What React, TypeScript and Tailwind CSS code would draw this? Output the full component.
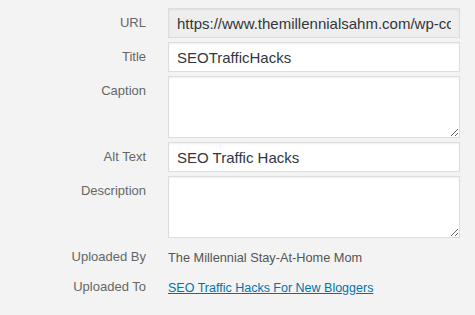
import React from "react";

function Label({ children }: { children: React.ReactNode }) {
  return (
    <div className="w-[146px] shrink-0 text-right pt-[6px] leading-[18px] text-[13px] text-[#666666]">
      {children}
    </div>
  );
}

const inputCls =
  "w-[292px] h-[30px] border border-[#dddddd] px-[8px] text-[15px] text-[#32373c] shadow-[inset_0_1px_2px_rgba(0,0,0,0.07)] outline-none";
const areaCls =
  "block w-[292px] h-[62px] border border-[#dddddd] bg-white px-[8px] py-[4px] text-[15px] text-[#32373c] shadow-[inset_0_1px_2px_rgba(0,0,0,0.07)] outline-none resize-y";

export default function App() {
  return (
    <div
      className="w-[475px] h-[315px] bg-[#f3f3f3] pt-[8px] overflow-hidden"
      style={{ fontFamily: '"Liberation Sans", Arial, sans-serif' }}
    >
      <div className="flex flex-col gap-[4px]">
        <div className="flex">
          <Label>URL</Label>
          <div className="ml-[22px]">
            <input
              readOnly
              className={inputCls + " bg-[#eeeeee]"}
              value="https://www.themillennialsahm.com/wp-content/uploads/2018/01/SEOTrafficHacks.png"
            />
          </div>
        </div>
        <div className="flex">
          <Label>Title</Label>
          <div className="ml-[22px]">
            <input readOnly className={inputCls + " bg-white"} value="SEOTrafficHacks" />
          </div>
        </div>
        <div className="flex">
          <Label>Caption</Label>
          <div className="ml-[22px]">
            <textarea readOnly className={areaCls} />
          </div>
        </div>
        <div className="flex">
          <Label>Alt Text</Label>
          <div className="ml-[22px]">
            <input readOnly className={inputCls + " bg-white"} value="SEO Traffic Hacks" />
          </div>
        </div>
        <div className="flex">
          <Label>Description</Label>
          <div className="ml-[22px]">
            <textarea readOnly className={areaCls} />
          </div>
        </div>
        <div className="flex h-[30px]">
          <Label>Uploaded By</Label>
          <div className="ml-[22px] pt-[7px] leading-[18px] text-[12.75px] text-[#555555]">
            The Millennial Stay-At-Home Mom
          </div>
        </div>
        <div className="flex h-[24px] -mt-[4px]">
          <Label>Uploaded To</Label>
          <div className="ml-[22px] pt-[7px] leading-[18px] text-[12.5px]">
            <a href="#" className="text-[#0073aa] underline">
              SEO Traffic Hacks For New Bloggers
            </a>
          </div>
        </div>
      </div>
    </div>
  );
}
